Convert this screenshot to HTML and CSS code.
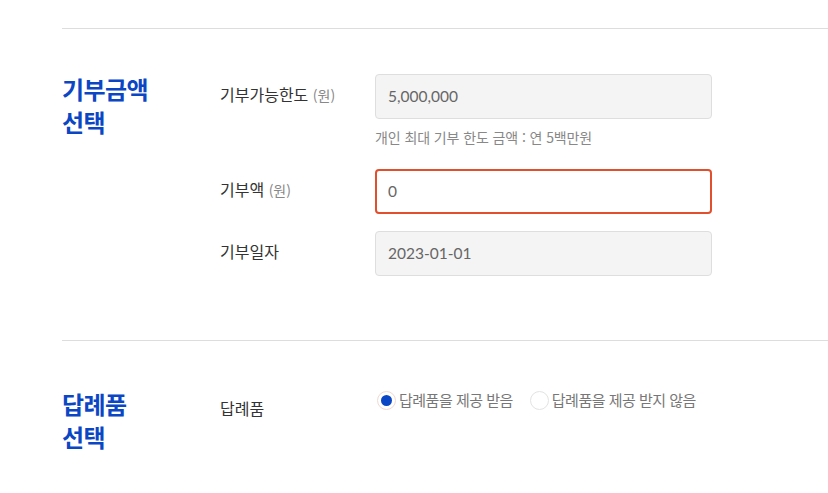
FILE: index.html
```html
<!DOCTYPE html>
<html lang="ko">
<head>
<meta charset="utf-8">
<link rel="stylesheet" href="styles.css">
</head>
<body>
<div class="page">
  <section class="section sec-amount">
    <h2 class="sec-title">기부금액<br>선택</h2>
    <div class="fields">
      <div class="row">
        <div class="label">기부가능한도 <span class="unit">(원)</span></div>
        <div class="control">
          <div class="input readonly">5,000,000</div>
          <p class="hint">개인 최대 기부 한도 금액 : 연 5백만원</p>
        </div>
      </div>
      <div class="row">
        <div class="label">기부액 <span class="unit">(원)</span></div>
        <div class="control">
          <div class="input error">0</div>
        </div>
      </div>
      <div class="row">
        <div class="label">기부일자</div>
        <div class="control">
          <div class="input readonly">2023-01-01</div>
        </div>
      </div>
    </div>
  </section>
  <section class="section sec-gift">
    <h2 class="sec-title">답례품<br>선택</h2>
    <div class="fields">
      <div class="row gift-row">
        <div class="label gift-label">답례품</div>
        <div class="radios">
          <label class="radio"><span class="dot checked"></span>답례품을 제공 받음</label>
          <label class="radio"><span class="dot"></span>답례품을 제공 받지 않음</label>
        </div>
      </div>
    </div>
  </section>
</div>
</body>
</html>
```
FILE: styles.css
```css
* { box-sizing: border-box; }
html, body { margin: 0; padding: 0; background: #fff; }
body {
  font-family: "Lato", "Noto Sans CJK KR", sans-serif;
  color: #333;
}
.page {
  padding: 28px 0 0 62px;
}
.section {
  display: flex;
  border-top: 1px solid #dddddd;
}
.sec-amount { padding: 45px 0 64px; }
.sec-gift { padding: 47px 0 40px; }
.sec-title {
  width: 158px;
  flex: none;
  margin: 0;
  font-family: "Noto Sans CJK KR", sans-serif;
  font-size: 24px;
  font-weight: 700;
  line-height: 33px;
  color: #0b46c4;
  letter-spacing: -0.6px;
}
.sec-amount .sec-title { margin-top: -2px; }
.sec-gift .sec-title { margin-top: -1px; }
.fields { display: flex; flex-direction: column; gap: 18px; }
.row { display: flex; align-items: flex-start; }
.label {
  width: 155px;
  flex: none;
  font-family: "Noto Sans CJK KR", sans-serif;
  font-size: 16px;
  color: #333;
  line-height: 41px;
  letter-spacing: 0;
}
.unit { font-size: 14px; color: #888; }
.control { width: 337px; }
.input {
  height: 45px;
  border: 1px solid #dedede;
  border-radius: 4px;
  background: #f4f4f4;
  padding: 0 12px;
  font-size: 15.5px;
  line-height: 43px;
  color: #666;
}
.input.error {
  background: #fff;
  border: 2px solid #e14f2c;
  line-height: 41px;
  padding: 0 11px;
}
.hint {
  margin: 8px 0 4px;
  font-family: "Noto Sans CJK KR", sans-serif;
  font-size: 14px;
  line-height: 20px;
  color: #888;
  letter-spacing: -0.1px;
}
.fields > .row:nth-child(3) { margin-top: -1px; }
.gift-row { align-items: flex-start; }
.gift-label { line-height: 24px; margin-top: 8px; }
.radios { display: flex; gap: 15px; margin-top: 0; }
.radio {
  display: flex;
  align-items: center;
  gap: 3px;
  font-family: "Noto Sans CJK KR", sans-serif;
  font-size: 15px;
  color: #777;
  letter-spacing: -0.5px;
  line-height: 24px;
}
.dot {
  width: 19px;
  height: 19px;
  border-radius: 50%;
  border: 1px solid #e3e3e3;
  background: #fff;
  margin-left: 2px;
  position: relative;
}
.dot.checked { border-color: #f0d9d2; }
.dot.checked::after {
  content: "";
  position: absolute;
  left: 3px;
  top: 3px;
  width: 11px;
  height: 11px;
  border-radius: 50%;
  background: #0b46c4;
}
```
